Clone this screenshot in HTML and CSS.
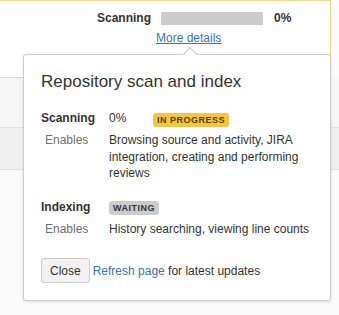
FILE: index.html
```html
<!DOCTYPE html>
<html lang="en">
<head>
    <meta charset="UTF-8">
    <meta name="viewport" content="width=device-width, initial-scale=1.0">
    <title>Repository scan and index</title>
    <link rel="stylesheet" href="styles.css">
</head>
<body>
    <div class="page">
        <div class="status-bar">
            <div class="status-row">
                <span class="status-label">Scanning</span>
                <div class="progress"><div class="progress-fill" style="width: 0%"></div></div>
                <span class="status-percent">0%</span>
            </div>
            <a href="#" class="more-details">More details</a>
        </div>
        <div class="band band-light"></div>
        <div class="band band-dark"></div>

        <div class="dialog">
            <div class="dialog-arrow"></div>
            <h2 class="dialog-title">Repository scan and index</h2>

            <div class="task">
                <div class="task-head">
                    <span class="task-name">Scanning</span>
                    <span class="task-percent">0%</span>
                    <span class="lozenge lozenge-progress">In progress</span>
                </div>
                <div class="task-info">
                    <span class="task-key">Enables</span>
                    <span class="task-value">Browsing source and activity, JIRA integration, creating and performing reviews</span>
                </div>
            </div>

            <div class="task">
                <div class="task-head">
                    <span class="task-name">Indexing</span>
                    <span class="lozenge lozenge-waiting">Waiting</span>
                </div>
                <div class="task-info">
                    <span class="task-key">Enables</span>
                    <span class="task-value">History searching, viewing line counts</span>
                </div>
            </div>

            <div class="dialog-footer">
                <button class="btn">Close</button>
                <span><a href="#" class="link">Refresh page</a> for latest updates</span>
            </div>
        </div>
    </div>
</body>
</html>
```

FILE: styles.css
```css
* {
    margin: 0;
    padding: 0;
    box-sizing: border-box;
}

body {
    font-family: Arial, "Liberation Sans", sans-serif;
    font-size: 12px;
    color: #333;
    background: #fafafa;
}

.page {
    position: relative;
    width: 339px;
    height: 315px;
    overflow: hidden;
}

.status-bar {
    width: 331px;
    height: 78px;
    background: #fff;
    border: 1px solid #f3d98a;
    border-left: none;
    padding: 9px 0 0 97px;
}

.status-row {
    display: flex;
    align-items: center;
    height: 16px;
}

.status-label,
.status-percent {
    font-size: 12px;
    font-weight: bold;
    color: #333;
}

.progress {
    width: 102px;
    height: 13px;
    margin: 0 11px 0 10px;
    background: #ccc;
}

.progress-fill {
    height: 100%;
    background: #3b73af;
}

.more-details {
    display: inline-block;
    margin: 5px 0 0 59px;
    font-size: 12px;
    color: #3b73af;
}

.band {
    width: 100%;
    border-bottom: 1px solid #e2e2e2;
}

.band-light {
    height: 50px;
    background: #f6f6f6;
}

.band-dark {
    height: 42px;
    background: #f0f0f0;
}

/* dialog */
.dialog {
    position: absolute;
    left: 23px;
    top: 54px;
    width: 308px;
    height: 247px;
    background: #fff;
    border: 1px solid #ccc;
    border-radius: 3px;
    box-shadow: 0 1px 3px rgba(0, 0, 0, 0.12);
    padding: 17px 17px 0 17px;
}

.dialog-arrow {
    position: absolute;
    top: -6px;
    left: 161px;
    width: 10px;
    height: 10px;
    background: #fff;
    border-left: 1px solid #ccc;
    border-top: 1px solid #ccc;
    transform: rotate(45deg);
}

.dialog-title {
    font-size: 17px;
    font-weight: normal;
    color: #333;
    line-height: 20px;
    margin-bottom: 18px;
}

.task {
    margin-bottom: 17px;
}

.task-head {
    display: flex;
    align-items: center;
    height: 16px;
    margin-bottom: 6px;
}

.task-name {
    width: 68px;
    font-weight: bold;
}

.task-percent {
    width: 44px;
}

.task-info {
    display: flex;
    line-height: 16.5px;
}

.task-key {
    width: 68px;
    flex-shrink: 0;
    padding-left: 4px;
    color: #707070;
}

.task-value {
    color: #333;
}

.lozenge {
    display: inline-block;
    margin-top: 3px;
    font-size: 9px;
    font-weight: bold;
    text-transform: uppercase;
    letter-spacing: 0.5px;
    line-height: 14px;
    padding: 0 4px;
    border-radius: 3px;
}

.lozenge-progress {
    background: #f6c342;
    color: #594300;
}

.lozenge-waiting {
    background: #ccc;
    color: #333;
}

.dialog-footer {
    display: flex;
    align-items: center;
    gap: 3px;
    margin-top: 21px;
}

.btn {
    font-family: inherit;
    font-size: 12px;
    color: #333;
    background: #f2f2f2;
    border: 1px solid #ccc;
    border-radius: 3px;
    height: 25px;
    padding: 0 8px;
}

.link {
    color: #3b73af;
    text-decoration: none;
}
```
